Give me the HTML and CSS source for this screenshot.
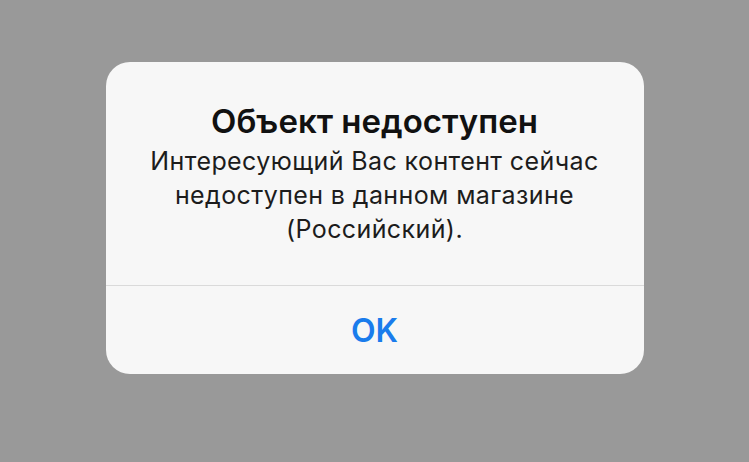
FILE: index.html
```html
<!DOCTYPE html>
<html lang="ru">

<head>
    <meta charset="UTF-8">
    <meta name="viewport" content="width=device-width, initial-scale=1.0">
    <title>Объект недоступен</title>
    <link rel="stylesheet" href="styles.css">
</head>

<body>
    <div class="pantalla">
        <div class="alerta">
            <div class="contenido">
                <h1 class="titulo">Объект недоступен</h1>
                <p class="mensaje">Интересующий Вас контент сейчас<br>недоступен в данном магазине<br>(Российский).</p>
            </div>
            <button class="boton">OK</button>
        </div>
    </div>
</body>

</html>
```

FILE: styles.css
```css
* {
    margin: 0;
    padding: 0;
    box-sizing: border-box;
}

body {
    background-color: #999999;
    font-family: Inter, "Liberation Sans", sans-serif;
}

.pantalla {
    display: flex;
    justify-content: center;
    height: 462px;
    padding-top: 62px;
}

.alerta {
    width: 538px;
    height: 312px;
    background-color: #f7f7f7;
    border-radius: 24px;
    display: flex;
    flex-direction: column;
    overflow: hidden;
}

.contenido {
    height: 224px;
    padding-top: 39px;
    text-align: center;
    border-bottom: 1px solid #dadada;
}

.titulo {
    font-size: 33px;
    font-weight: 600;
    color: #111111;
    line-height: 40px;
}

.mensaje {
    margin-top: 3px;
    font-size: 25px;
    letter-spacing: 0.4px;
    line-height: 34px;
    color: #1c1c1c;
}

.boton {
    flex: 1;
    border: none;
    background: transparent;
    font-family: inherit;
    font-size: 32px;
    font-weight: 600;
    color: #1a7cec;
}
```
